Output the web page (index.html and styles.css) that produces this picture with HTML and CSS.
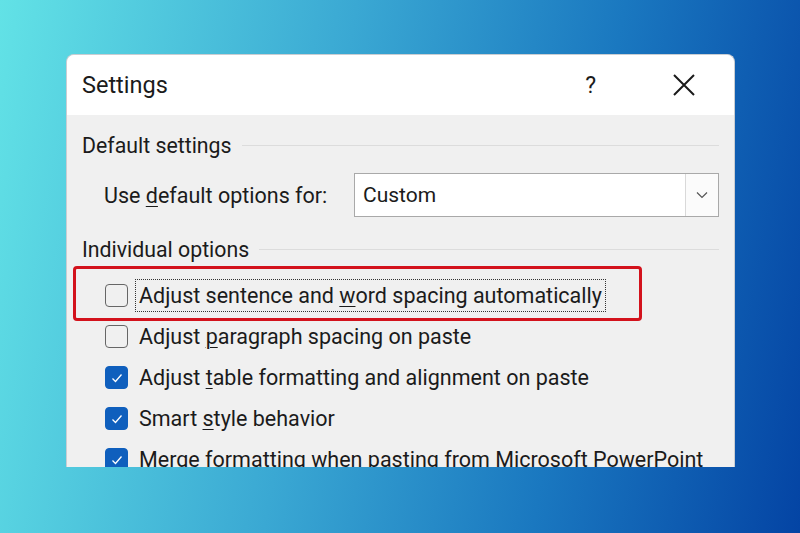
FILE: index.html
```html
<!DOCTYPE html>
<html lang="en">
<head>
    <meta charset="UTF-8">
    <title>Settings</title>
    <link rel="stylesheet" href="styles.css">
</head>
<body>
    <div class="dialog">
        <div class="titlebar">
            <span class="title">Settings</span>
            <span class="help">?</span>
            <svg class="close" width="24" height="24" viewBox="0 0 24 24">
                <path d="M2 2 L22 22 M22 2 L2 22" stroke="#1a1a1a" stroke-width="2" fill="none"/>
            </svg>
        </div>

        <div class="content">
            <div class="group">
                <span>Default settings</span>
                <div class="rule"></div>
            </div>

            <div class="field">
                <span class="label">Use <u>d</u>efault options for:</span>
                <div class="select">
                    <span class="value">Custom</span>
                    <div class="arrow">
                        <svg width="12" height="8" viewBox="0 0 12 8">
                            <path d="M1 1.5 L6 6.5 L11 1.5" stroke="#555" stroke-width="1.2" fill="none"/>
                        </svg>
                    </div>
                </div>
            </div>

            <div class="group second">
                <span>Individual options</span>
                <div class="rule"></div>
            </div>

            <div class="options">
                <!-- red annotation box sits over the first option -->
                <div class="mark"></div>
                <div class="option">
                    <span class="box"></span>
                    <span class="text focus">Adjust sentence and <u>w</u>ord spacing automatically</span>
                </div>
                <div class="option">
                    <span class="box"></span>
                    <span class="text">Adjust <u>p</u>aragraph spacing on paste</span>
                </div>
                <div class="option">
                    <span class="box checked"><svg width="14" height="12" viewBox="0 0 14 12"><path d="M2.5 6.5 L5.5 9.5 L11.5 2.5" stroke="#fff" stroke-width="1.3" fill="none"/></svg></span>
                    <span class="text">Adjust <u>t</u>able formatting and alignment on paste</span>
                </div>
                <div class="option">
                    <span class="box checked"><svg width="14" height="12" viewBox="0 0 14 12"><path d="M2.5 6.5 L5.5 9.5 L11.5 2.5" stroke="#fff" stroke-width="1.3" fill="none"/></svg></span>
                    <span class="text">Smart <u>s</u>tyle behavior</span>
                </div>
                <div class="option">
                    <span class="box checked"><svg width="14" height="12" viewBox="0 0 14 12"><path d="M2.5 6.5 L5.5 9.5 L11.5 2.5" stroke="#fff" stroke-width="1.3" fill="none"/></svg></span>
                    <span class="text">Merge formatting when pasting from Microsoft PowerPoint</span>
                </div>
            </div>
        </div>
    </div>
</body>
</html>
```

FILE: styles.css
```css
body {
    margin: 0;
    height: 533px;
    overflow: hidden;
    background: linear-gradient(100deg, #62e2e6 0%, #3aa8d3 40%, #1a78c0 70%, #0444a4 100%);
    font-family: 'Roboto', 'Liberation Sans', sans-serif;
    color: #1b1b1b;
    padding-top: 54px;
    box-sizing: border-box;
}

.dialog {
    margin-left: 66px;
    width: 669px;
    height: 413px;
    background: #f0f0f0;
    border: 1px solid #c9cdd2;
    border-bottom: none;
    border-radius: 8px 8px 0 0;
    overflow: hidden;
    box-sizing: border-box;
}

.titlebar {
    height: 60px;
    background: #fff;
    display: flex;
    align-items: center;
    padding: 0 38px 0 15px;
}

.title {
    font-size: 23.5px;
    flex: 1;
}

.help {
    font-size: 23px;
    margin-right: 76px;
}

.content {
    padding: 18px 15px 0 15px;
}

.group {
    display: flex;
    align-items: center;
    height: 24px;
    font-size: 21.3px;
}

.group .rule {
    flex: 1;
    height: 1px;
    background: #dcdcdc;
    margin-left: 10px;
}

.group.second {
    margin-top: 20px;
}

.field {
    display: flex;
    align-items: center;
    margin-top: 16px;
    padding-left: 22px;
}

.label {
    font-size: 21.5px;
    width: 250px;
}

.select {
    flex: 1;
    height: 44px;
    background: #fff;
    border: 1px solid #a9a9a9;
    display: flex;
    align-items: center;
    box-sizing: border-box;
}

.select .value {
    flex: 1;
    font-size: 21px;
    padding-left: 8px;
}

.select .arrow {
    width: 32px;
    height: 100%;
    border-left: 1px solid #d9d9d9;
    background: #fbfbfb;
    display: flex;
    align-items: center;
    justify-content: center;
}

.options {
    position: relative;
    margin-top: 14px;
    padding-left: 23px;
}

.mark {
    position: absolute;
    left: -9px;
    top: -9px;
    width: 569px;
    height: 55px;
    border: 3px solid #d3121c;
    border-radius: 4px;
    box-sizing: border-box;
}

.option {
    display: flex;
    align-items: center;
    height: 41px;
    font-size: 21.5px;
}

.box {
    width: 23px;
    height: 23px;
    border: 1.5px solid #666;
    border-radius: 4px;
    box-sizing: border-box;
    margin-right: 11px;
    display: flex;
    align-items: center;
    justify-content: center;
}

.box.checked {
    background: #0f5fbd;
    border-color: #0f5fbd;
}

.text.focus {
    outline: 1px dotted #333;
    outline-offset: 3px;
}

u {
    text-decoration-thickness: 1px;
    text-underline-offset: 3px;
}
```
